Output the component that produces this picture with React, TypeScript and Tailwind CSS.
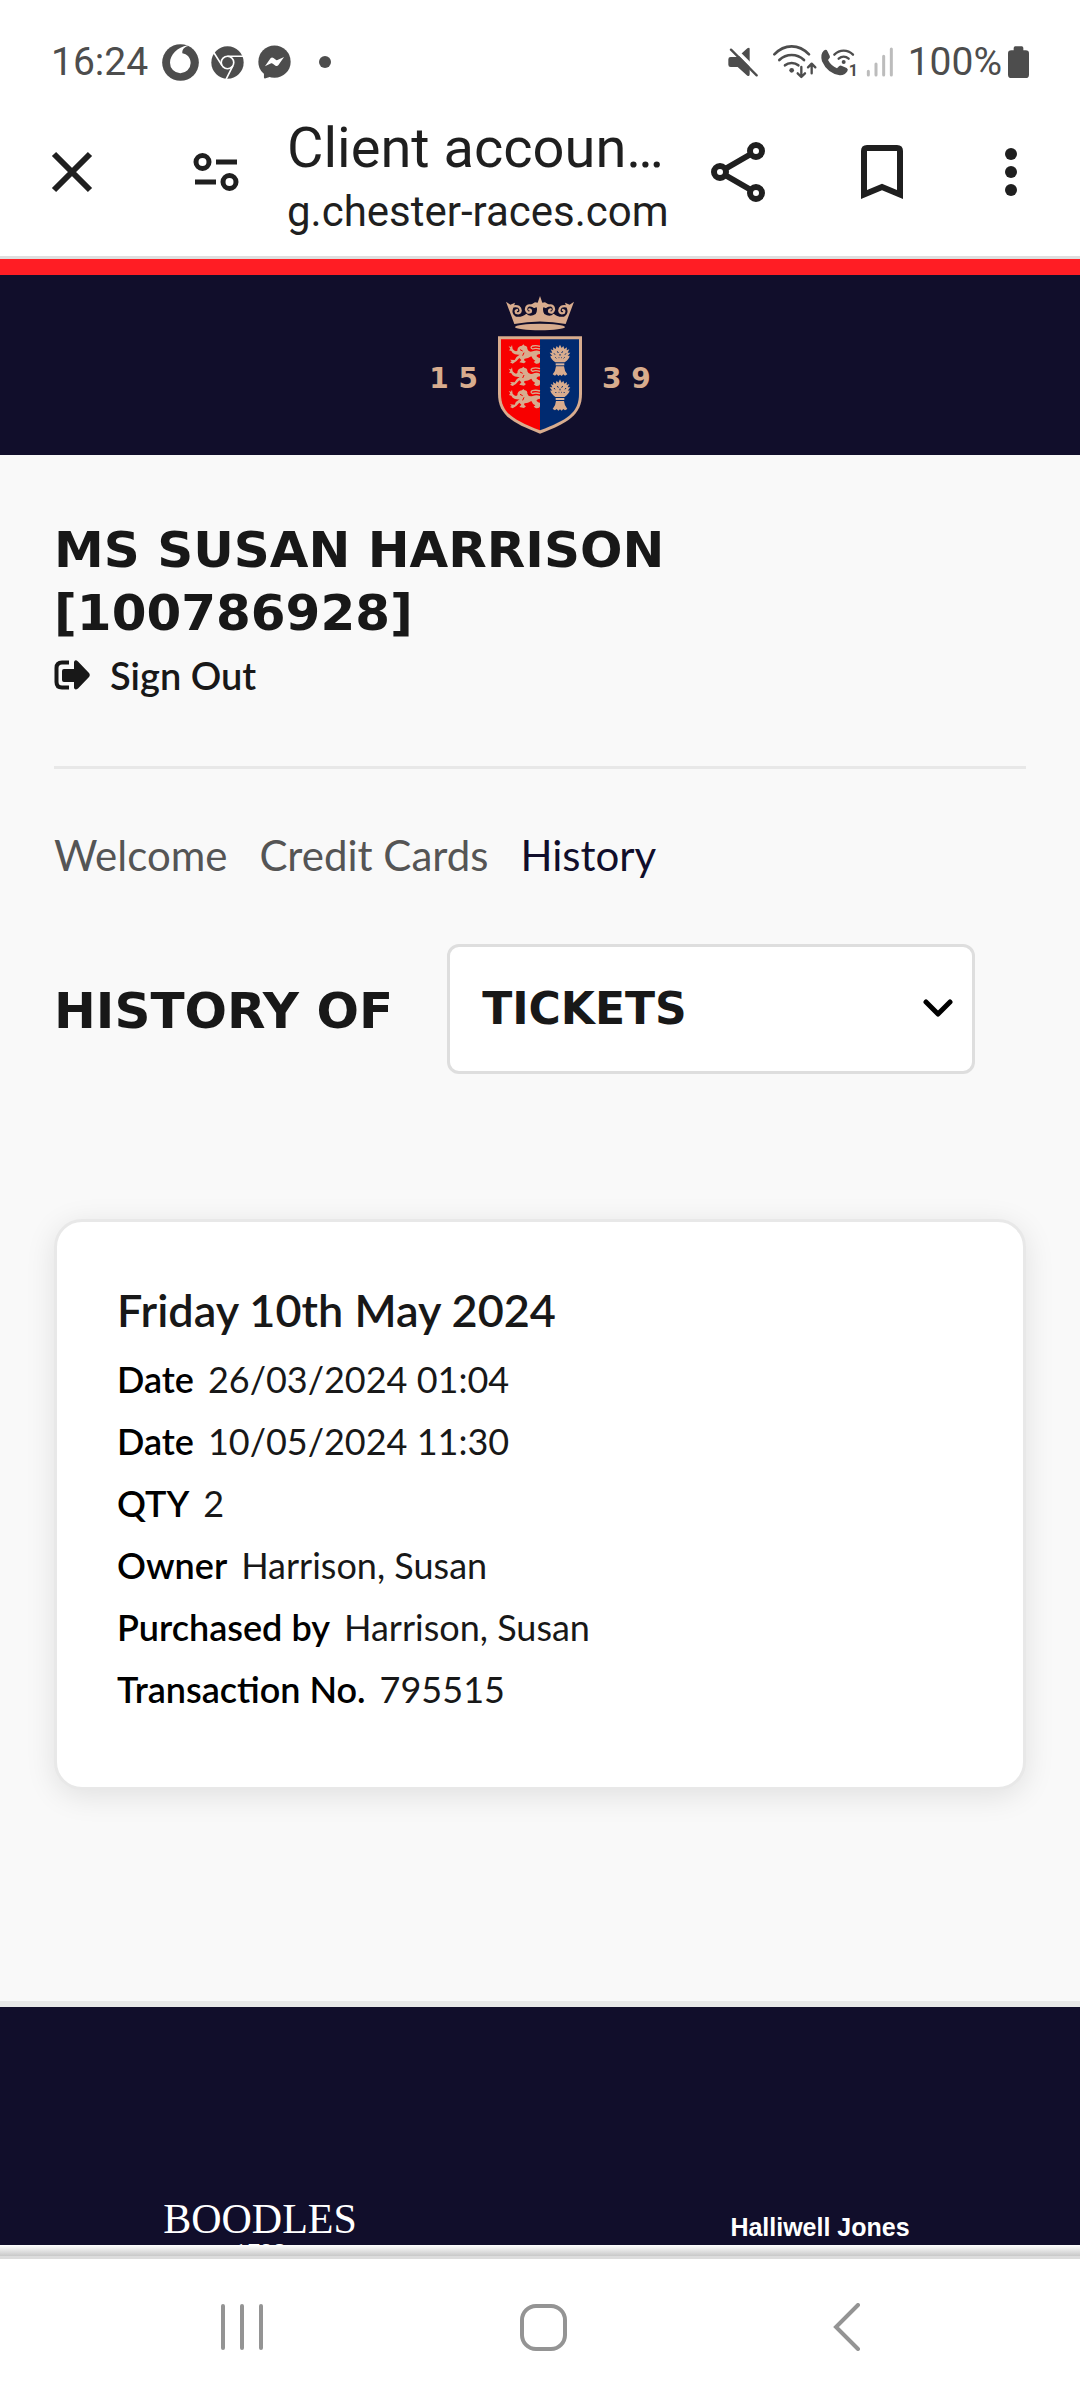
import type { ReactNode } from 'react';

interface HistoryField {
  label: string;
  value: string;
}

const fields: HistoryField[] = [
  { label: 'Date', value: '26/03/2024 01:04' },
  { label: 'Date', value: '10/05/2024 11:30' },
  { label: 'QTY', value: '2' },
  { label: 'Owner', value: 'Harrison, Susan' },
  { label: 'Purchased by', value: 'Harrison, Susan' },
  { label: 'Transaction No.', value: '795515' },
];

const tabs = ['Welcome', 'Credit Cards', 'History'];

/* ---------- Status bar ---------- */

function StatusBar() {
  return (
    <div className="flex items-center justify-between pt-[38px] pl-[51px] pr-[51px] text-[39px] leading-[48px] text-[#4d4d4d] font-['Roboto',sans-serif]">
      <div className="flex items-center">
        <span>16:24</span>
        <svg className="ml-3.5 w-[37px] h-[37px]" viewBox="36 42 111 111" aria-hidden="true">
          <circle cx="91.5" cy="97.5" r="55" fill="currentColor" />
          <path
            d="M113 46C82 51 60 76 60 98A31 31 0 0 0 122 99C122 83 111 72 97 70C96 60 102 51 113 49Z"
            fill="#fff"
          />
        </svg>
        <svg className="ml-3 w-[33px] h-[33px]" viewBox="182 47 100 100" aria-hidden="true">
          <circle cx="232" cy="97" r="49" fill="currentColor" />
          <g fill="none" stroke="#fff" strokeWidth="5">
            <circle cx="232" cy="97" r="19" />
            <path d="M232 78H282M215.500 106.500L190 66M248.500 106.500L228 147" />
          </g>
        </svg>
        <svg className="ml-3.5 w-[33px] h-[34px]" viewBox="323 47 100 102" aria-hidden="true">
          <circle cx="373" cy="97" r="49" fill="currentColor" />
          <path d="M341 118V145Q342 149 346 147L366 141Z" fill="currentColor" />
          <path
            d="M344 111L361 87Q365 82 370 86L378 92Q380 93 382 92L402 83L385 107Q381 112 376 109L368 103Q366 101 363 102Z"
            fill="#fff"
          />
        </svg>
        <span className="ml-7 w-3 h-3 rounded-full bg-[#4d4d4d]" />
      </div>

      <div className="flex items-center">
        <svg className="w-[30px] h-[30px]" viewBox="53 50 90 90" aria-hidden="true">
          <path
            d="M61 80Q54 80 54 87V103Q54 110 61 110H82L111 136Q118 140 118 132V56Q118 49 111 54L82 80Z"
            fill="currentColor"
          />
          <path d="M60 43L150 133" stroke="#fff" strokeWidth="11" />
          <path d="M62 58L139 135" stroke="currentColor" strokeWidth="7" strokeLinecap="round" />
        </svg>
        <svg className="ml-3.5 w-[46px] h-[36px]" viewBox="182 42 138 108" aria-hidden="true">
          <g fill="none" stroke="currentColor" strokeWidth="8" strokeLinecap="round">
            <path d="M189 73Q212 49 241 49Q270 49 293 73" />
            <path d="M204 90Q220 75 241 75Q262 75 278 90" />
            <path d="M221 106Q229 99 241 99Q253 99 261 106" />
          </g>
          <circle cx="241" cy="121" r="7" fill="currentColor" />
          <g fill="none" stroke="currentColor" strokeWidth="7" strokeLinecap="round" strokeLinejoin="round">
            <path d="M270 111V139M259 130L270 141L281 130" />
            <path d="M301 130V103M290 112L301 101L312 112" />
          </g>
        </svg>
        <svg className="ml-0.5 w-[38px] h-[31px]" viewBox="328 49 114 93" aria-hidden="true">
          <path
            d="M339 60Q347 54 350 61L357 75Q360 80 355 84L352 88Q361 105 379 113L385 107Q389 103 394 106L408 112Q414 116 410 122Q402 135 387 134Q350 128 334 92Q328 70 339 60Z"
            fill="currentColor"
          />
          <g fill="none" stroke="currentColor" strokeWidth="7" strokeLinecap="round">
            <path d="M371 72Q383 60 399 60Q415 60 427 72" />
            <path d="M384 84Q391 78 399 78Q407 78 414 84" />
          </g>
          <circle cx="399" cy="94" r="6" fill="currentColor" />
          <text x="414" y="137" fontSize="48" fontWeight="700" fill="currentColor">
            1
          </text>
        </svg>
        <svg className="ml-2 w-[28px] h-[30px]" viewBox="467 50 84 90" aria-hidden="true">
          <g stroke="#bcbcbc" strokeWidth="9" strokeLinecap="round">
            <path d="M474 123V134M497 101V134M520 78V134M543 56V134" />
          </g>
        </svg>
        <span className="ml-3.5">100%</span>
        <svg className="ml-1.5 w-[21px] h-[32px]" viewBox="894 47 63 96" aria-hidden="true">
          <rect x="894" y="60" width="63" height="83" rx="10" fill="currentColor" />
          <rect x="911" y="48" width="29" height="20" rx="5" fill="currentColor" />
        </svg>
      </div>
    </div>
  );
}

/* ---------- Browser toolbar ---------- */

function ToolbarButton({ label, className, children }: { label: string; className: string; children: ReactNode }) {
  return (
    <button type="button" aria-label={label} className={`shrink-0 ${className}`}>
      {children}
    </button>
  );
}

function Toolbar() {
  return (
    <header className="flex items-center pt-0.5 pl-[51px] pr-[63px] text-[#1f1f1f] border-b-3 border-[#dedede] font-['Roboto',sans-serif]">
      <ToolbarButton label="Close tab" className="w-[42px]">
        <svg viewBox="0 0 42 42" stroke="currentColor" strokeWidth="6">
          <path d="M3 3L39 39M39 3L3 39" />
        </svg>
      </ToolbarButton>
      <ToolbarButton label="Site settings" className="ml-[100px] w-[46px]">
        <svg viewBox="193 153 46 38" fill="none" stroke="currentColor" strokeWidth="5">
          <circle cx="202.500" cy="162" r="6.500" />
          <circle cx="229.500" cy="182" r="6.500" />
          <path d="M216 162H237M195 182H216" />
        </svg>
      </ToolbarButton>
      <div className="flex-1 min-w-0 ml-12 pt-6 pb-4 whitespace-nowrap">
        <p className="text-[56px] leading-[72px]">Client accoun…</p>
        <p className="text-[42px] leading-[56px]">g.chester-races.com</p>
      </div>
      <ToolbarButton label="Share" className="ml-[46px] w-[54px]">
        <svg viewBox="711 142 54 60" fill="none" stroke="currentColor" strokeWidth="6">
          <circle cx="720" cy="172" r="6" />
          <circle cx="756" cy="151" r="6" />
          <circle cx="756" cy="193" r="6" />
          <path d="M725 169L751 154M725 175L751 190" />
        </svg>
      </ToolbarButton>
      <ToolbarButton label="Bookmark" className="ml-24 w-[42px]">
        <svg viewBox="861 145 42 54" fill="none" stroke="currentColor" strokeWidth="6">
          <path d="M864 194.500V151Q864 148 867 148H897Q900 148 900 151V194.500L882 187Z" />
        </svg>
      </ToolbarButton>
      <ToolbarButton label="More options" className="ml-[102px] w-3">
        <svg viewBox="0 0 12 48" fill="currentColor">
          <circle cx="6" cy="6" r="6" />
          <circle cx="6" cy="24" r="6" />
          <circle cx="6" cy="42" r="6" />
        </svg>
      </ToolbarButton>
    </header>
  );
}

/* ---------- Crest ---------- */

const lion =
  'M112 197Q112 184 126 182L130 178L134 182Q143 183 142 192Q146 203 158 199Q170 194 180 199V207Q172 207 169 213Q176 220 180 219V227Q181 237 168 236L161 231L166 227Q157 223 154 214Q144 221 134 221Q129 226 138 230L132 235L118 232L124 225L118 219Q109 231 98 236L90 232L95 229L90 224L104 225Q107 215 119 209Q104 210 98 204L94 198L87 196L91 191L86 184L93 186L96 180L98 192Q102 198 108 199Z';
const sheaf =
  'M226 232Q212 222 211 212L217 213L209 203L217 203L212 193L220 196L219 187L227 192L230 183L235 189L240 179L245 189L250 183L253 192L261 187L260 196L268 193L263 203L271 203L263 213L269 212Q268 222 254 232Z';

function Crest() {
  return (
    <svg className="w-[84px] h-[140px]" viewBox="54 30 252 420" aria-hidden="true">
      <g fill="#d8ac8e">
        <path d="M78 50L91 59L105 53L100 68Q92 86 108 95Q128 97 139 86Q150 98 167 87Q173 76 170 67L160 69L163 61L150 61L165 52L173 53L180 33L187 53L195 52L210 61L197 61L200 69L190 67Q187 76 193 87Q210 98 221 86Q232 97 252 95Q268 86 260 68L255 53L269 59L282 50L257 117Q180 102 103 117Z" />
        <ellipse cx="180" cy="126" rx="75" ry="10" />
      </g>
      <g fill="none" stroke="#d8ac8e" strokeWidth="7" strokeLinecap="round">
        <path d="M100 64Q121 60 122 77Q120 88 109 84Q104 77 111 75" />
        <path d="M163 65Q139 54 138 74Q142 87 152 81Q155 74 148 73" />
        <path d="M260 64Q239 60 238 77Q240 88 251 84Q256 77 249 75" />
        <path d="M197 65Q221 54 222 74Q218 87 208 81Q205 74 212 73" />
      </g>
      <path d="M54 154H306V326C306 390 262 414 180 446C98 414 54 390 54 326Z" fill="#d8ac8e" />
      <path d="M180 163V436C98 404 63 383 63 326V163Z" fill="#f80000" />
      <path d="M180 163V436C262 404 297 383 297 326V163Z" fill="#002a70" />
      {[0, 67, 134].map((dy) => (
        <g key={dy} transform={`translate(0 ${dy})`}>
          <path d={lion} fill="#d8ac8e" />
          <path d="M180 192Q166 188 158 192Q149 188 157 183Q168 180 180 184" fill="none" stroke="#d8ac8e" strokeWidth="4" />
          <path d="M120 194L128 198M132 203L128 212" stroke="#f80000" strokeWidth="3" />
        </g>
      ))}
      {[0, 104].map((dy) => (
        <g key={dy} transform={`translate(0 ${dy})`}>
          <path d={sheaf} fill="#d8ac8e" />
          <path
            d="M222 205L225 209M232 199L235 204M240 207V212M248 199L245 204M258 205L255 209M226 217L229 220M254 217L251 220M236 218H238M243 218H245"
            stroke="#002a70"
            strokeWidth="3"
          />
          <rect x="227" y="235" width="26" height="6" fill="#d8b6a0" />
          <path d="M228 244H252Q253 258 262 268L255 272L250 268L245 273L240 269L235 273L230 268L225 272L218 268Q227 258 228 244Z" fill="#d8ac8e" />
        </g>
      ))}
    </svg>
  );
}

/* ---------- Page ---------- */

function AccountPage() {
  return (
    <div className="flex flex-col flex-1 min-h-0 overflow-hidden bg-[#f9f9f9] text-[#181818] font-['Lato',sans-serif]">
      <div className="flex shrink-0 items-center justify-center gap-5 border-t-16 border-[#ff1d24] bg-[#110e2b] pt-5 pb-5 text-[28px] font-bold text-[#d8ac8e] font-['DejaVu_Sans',sans-serif]">
        <span className="pt-7">1 5</span>
        <Crest />
        <span className="pt-7">3 9</span>
      </div>

      <main className="shrink-0 px-[54px] pt-16 pb-[211px]">
        <h1 className="text-[50px] leading-[63px] font-bold font-['DejaVu_Sans',sans-serif]">
          MS SUSAN HARRISON
          <br />
          [100786928]
        </h1>
        <a href="#sign-out" className="mt-0.5 inline-flex items-center gap-5 text-[38px] leading-[56px] font-semibold">
          <svg className="w-9 h-[30px]" viewBox="54 660 36 30" aria-hidden="true">
            <path
              d="M69 662.500H62Q56.500 662.500 56.500 668V682Q56.500 687.500 62 687.500H69"
              fill="none"
              stroke="currentColor"
              strokeWidth="4"
            />
            <path
              d="M64 669H74V662Q75 659 78 661.500L89 673Q90.500 675 89 677L78 688.500Q75 690.500 74 688V682H64Q62 682 62 680V671Q62 669 64 669Z"
              fill="currentColor"
            />
          </svg>
          Sign Out
        </a>

        <nav className="mt-[63px] flex gap-8 border-t-3 border-[#e8e8e8] pt-[58px] text-[42px] leading-[56px] text-[#555]">
          {tabs.map((tab) => (
            <a key={tab} href="#tab" className={tab === 'History' ? 'text-[#110e2b]' : ''}>
              {tab}
            </a>
          ))}
        </nav>

        <div className="mt-[61px] mr-[51px] flex items-center gap-[54px] font-bold font-['DejaVu_Sans',sans-serif]">
          <label htmlFor="history-type" className="shrink-0 pt-1 text-[50px] leading-[63px]">
            HISTORY OF
          </label>
          <div className="relative flex-1">
            <select
              id="history-type"
              className="w-full h-[130px] appearance-none rounded-xl border-3 border-[#dedede] bg-white pl-8 text-[44px]"
            >
              <option>TICKETS</option>
            </select>
            <svg
              className="pointer-events-none absolute right-[22px] top-[54px] w-[30px] h-[20px]"
              viewBox="0 0 30 20"
              fill="none"
              stroke="#000"
              strokeWidth="5"
              strokeLinecap="round"
              strokeLinejoin="round"
              aria-hidden="true"
            >
              <path d="M3 4L15 16L27 4" />
            </svg>
          </div>
        </div>

        <section className="mt-[145px] rounded-[28px] border-3 border-[#e8e8e8] bg-white px-[60px] pt-14 pb-[67px] shadow-[0_6px_30px_rgba(0,0,0,0.1)]">
          <h2 className="text-[45px] leading-[64px] font-semibold">Friday 10th May 2024</h2>
          <dl className="mt-1.5 text-[36px] leading-[62px]">
            {fields.map(({ label, value }, i) => (
              <div key={i} className="flex gap-3.5">
                <dt className="font-semibold text-black">{label}</dt>
                <dd>{value}</dd>
              </div>
            ))}
          </dl>
        </section>
      </main>

      <footer className="grid shrink-0 grid-cols-2 gap-10 border-t-6 border-[#e8e8e8] bg-[#110e2b] pt-48 pb-16 text-white">
        <div className="flex flex-col items-center font-['Liberation_Serif',serif]">
          <span className="text-[42px] leading-[40px]">BOODLES</span>
          <span className="text-[26px] leading-[28px]">1798</span>
        </div>
        <p className="pt-3 text-center text-[25px] leading-8 font-bold font-['Liberation_Sans',sans-serif]">
          Halliwell Jones
        </p>
      </footer>
    </div>
  );
}

/* ---------- System navigation ---------- */

function SystemNav() {
  return (
    <div className="border-t-3 border-[#dcdcdc]">
      <div className="flex justify-between bg-white pt-11 pb-[49px] pl-[218px] pr-[210px] text-[#949494]">
        <button type="button" aria-label="Recent apps">
          <svg className="w-12 h-12" viewBox="0 0 48 48" stroke="currentColor" strokeWidth="4" strokeLinecap="round">
            <path d="M5 3V45M24 3V45M43 3V45" />
          </svg>
        </button>
        <button type="button" aria-label="Home">
          <svg className="w-12 h-12" viewBox="0 0 48 48" fill="none" stroke="currentColor" strokeWidth="4">
            <rect x="2" y="3" width="43" height="43" rx="14" />
          </svg>
        </button>
        <button type="button" aria-label="Back">
          <svg
            className="w-12 h-12"
            viewBox="0 0 48 48"
            fill="none"
            stroke="currentColor"
            strokeWidth="4"
            strokeLinecap="round"
          >
            <path d="M36 2L14 24L36 46" />
          </svg>
        </button>
      </div>
    </div>
  );
}

export default function App() {
  return (
    <div className="flex flex-col h-screen bg-white">
      <StatusBar />
      <Toolbar />
      <AccountPage />
      <div className="h-[11px] bg-linear-to-b from-white to-[#c8c8c8]" />
      <SystemNav />
    </div>
  );
}
